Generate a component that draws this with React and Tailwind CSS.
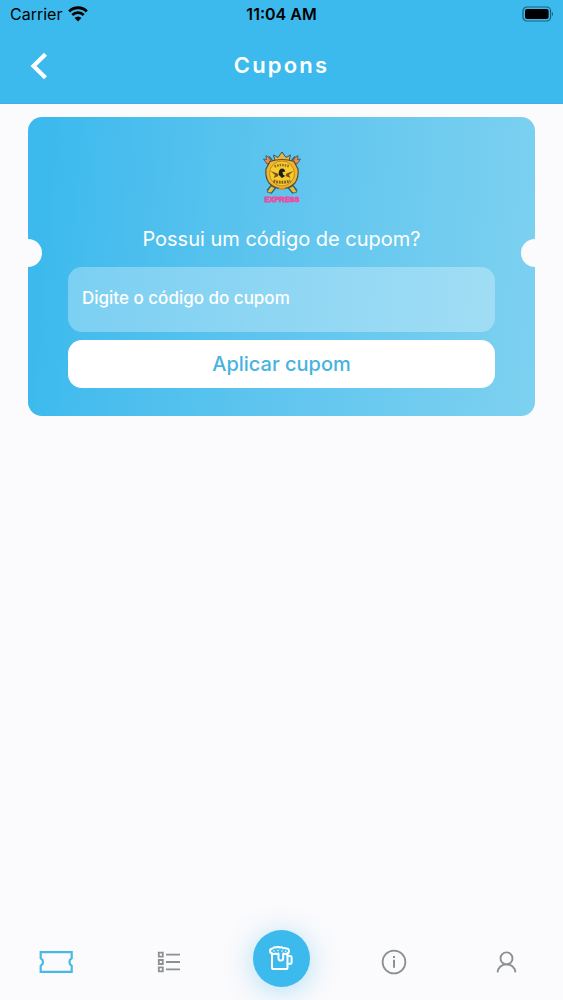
import { useState } from "react";

function StatusBar() {
  return (
    <div className="grid grid-cols-3 items-center h-7 px-2.5 text-black text-base leading-7">
      <div className="flex items-center gap-1.5">
        <span>Carrier</span>
        <svg className="w-5 h-4" viewBox="0 0 20 16" fill="none" stroke="currentColor" strokeWidth="2.8">
          <path d="M1.2 5.4a12.4 12.4 0 0 1 17.6 0" />
          <path d="M4.3 9a8 8 0 0 1 11.4 0" />
          <path d="M10 15.4l-3.4-3.4a4.600 4.600 0 0 1 6.800 0z" fill="currentColor" stroke="none" />
        </svg>
      </div>
      <div className="text-center font-semibold whitespace-nowrap">11:04 AM</div>
      <svg className="w-8 h-4 justify-self-end" viewBox="0 0 32 16" fill="none">
        <rect x="2" y="1" width="27.6" height="14" rx="4" stroke="#1c5f7d" strokeWidth="1.2" />
        <rect x="4" y="3" width="23.6" height="10" rx="2" fill="#000" />
        <path d="M31 6c1.3.7 1.3 3.3 0 4z" fill="#1c5f7d" />
      </svg>
    </div>
  );
}

function Header() {
  return (
    <header className="bg-[#3dbaed] border-b border-[#44afd9]">
      <StatusBar />
      <div className="grid grid-cols-3 items-center h-[75px] px-7 text-white">
        <button type="button" aria-label="Voltar" className="justify-self-start">
          <svg className="w-6 h-7" viewBox="0 0 24 28" fill="none" stroke="currentColor" strokeWidth="4.2">
            <path d="M17.5 2.2L5.5 14l12 11.8" />
          </svg>
        </button>
        <h1 className="text-center text-[22px] font-semibold tracking-widest">Cupons</h1>
      </div>
    </header>
  );
}

function Logo() {
  return (
    <svg className="w-10 h-14" viewBox="0 0 40 56" role="img" aria-label="Express">
      <g transform="translate(0 2)">
        {/* crossed sceptres */}
        <path d="M5 7L33 41M35 7L7 41" stroke="#27627c" strokeWidth="6.5" />
        <path d="M5 7L33 41M35 7L7 41" stroke="#ef9f38" strokeWidth="4" />
        <path d="M1.500 8l3 .5L4 4.500l3.500 2.500 2 4.500-4.500 1.500zM38.500 8l-3 .5.5-4-3.500 2.500-2 4.500 4.500 1.500z" fill="#ee8a4a" stroke="#3b5260" strokeWidth=".8" />
        <path d="M5 41l4-6 4 2-4 5zM35 41l-4-6-4 2 4 5z" fill="#e8c040" stroke="#2f5a60" strokeWidth=".8" />
        {/* crown */}
        <path d="M13 10l-1.500-6 4.500 2.500L20 1l4 5.500L28.500 4 27 10z" fill="#f0b23a" stroke="#3b5260" strokeWidth="1" />
        {/* medal */}
        <path d="M8 10.500q12-4 24 0l4 7.500q1 8-3 14-5 5-13 6-8-1-13-6-4-6-3-14z" fill="#f2b52c" stroke="#4b5340" strokeWidth="1.2" />
        <circle cx="20" cy="22.500" r="12.500" fill="#f8ca2c" stroke="#c08c22" strokeWidth="1" />
        <path d="M12.500 15.500q7.500-3 15 0" stroke="#94711f" strokeWidth="2.600" strokeDasharray="1.600 1" fill="none" />
        <path d="M8.500 20l7 2.500 1 2.500-5 2 1.500-3zM31.500 20l-7 2.500-1 2.500 5 2-1.500-3z" fill="#735420" />
        <path d="M17 20q1.500-3.500 5-2l1.500 2.500-3 .5.500 2.500 2 1.500-3 2-3.500-3.500z" fill="#17201d" />
        <path d="M11.500 30q8.500 2.500 17 0" stroke="#80601f" strokeWidth="3" strokeDasharray="1.800 .9" fill="none" />
        <path d="M14 36q6 2.500 12 0l-6 3.500z" fill="#dc962e" />
      </g>
      <text x="20" y="53" textAnchor="middle" fontSize="7.4" fontWeight="900" fill="#e650a5" stroke="#e650a5" strokeWidth="0.9" fontFamily="Liberation Sans, sans-serif">EXPRESS</text>
    </svg>
  );
}

function CouponCard() {
  const [code, setCode] = useState("");

  return (
    <form
      onSubmit={e => e.preventDefault()}
      className="relative overflow-hidden mx-7 mt-[13px] px-10 pt-8 pb-7 rounded-[14px] bg-linear-95 from-[#3dbaed] from-5% to-[#7dd1f0] flex flex-col"
    >
      <span className="absolute top-[122px] -left-3.5 size-7 rounded-full bg-[#fbfafc]" />
      <span className="absolute top-[122px] -right-3.5 size-7 rounded-full bg-[#fbfafc]" />
      <div className="flex justify-center">
        <Logo />
      </div>
      <label htmlFor="code" className="mt-5 mb-3.5 text-center text-xl leading-7 text-white">
        Possui um código de cupom?
      </label>
      <input
        id="code"
        type="text"
        value={code}
        onChange={e => setCode(e.target.value)}
        placeholder="Digite o código do cupom"
        className="w-full h-[65px] px-3.5 pb-1 rounded-[14px] bg-white/30 text-[17px] font-medium text-white placeholder:text-white outline-none"
      />
      <button type="submit" className="mt-2 h-12 rounded-[14px] bg-white text-xl font-medium text-[#48b3de]">
        Aplicar cupom
      </button>
    </form>
  );
}

function TicketIcon() {
  return (
    <svg className="w-[34px] h-6" viewBox="0 0 34 24" fill="none" stroke="#48b8e5" strokeWidth="2.2">
      <path d="M1.700 2.200h31v6a4.300 4.300 0 0 0 0 7.600v6h-31v-6a4.300 4.300 0 0 0 0-7.600z" />
    </svg>
  );
}

function ListIcon() {
  return (
    <svg className="w-6 h-6" viewBox="0 0 24 24" fill="none" stroke="#8b9093">
      <path d="M1.8 2.6h4v4h-4zM1.8 10h4v4h-4zM1.8 17.4h4v4h-4z" strokeWidth="1.8" />
      <path d="M9 4.6h14M9 12h14M9 19.4h14" strokeWidth="1.9" />
    </svg>
  );
}

function BeerIcon() {
  return (
    <svg className="w-6 h-6" viewBox="0 0 24 24" fill="none" stroke="#fff" strokeWidth="2" strokeLinejoin="round" strokeLinecap="round">
      <path d="M3 8v14q0 1 1 1h13.500q1 0 1-1V8" />
      <path d="M18.500 10H21q1.600 0 1.600 1.600v4.600q0 1.600-1.600 1.600h-2.500" />
      <path d="M9.500 7.500q-1.500.8-3 0-1.600.9-3 0Q1 7.400 1 5t2.700-2.500Q5 .8 7 1.600q1.800-1.500 3.800 0 2-.9 3.400.6 1.500-.6 2.800.3 3-.2 3 2.500t-2.700 2.700q-1.600.5-3.100-.2v4.700q0 2.300-2.400 2.300T9.500 12.200z" />
      <path d="M5 5h.1M9 4.500h.1M13 5.100h.1M16.500 5.200h.1" strokeWidth="1.500" />
    </svg>
  );
}

function InfoIcon() {
  return (
    <svg className="w-[26px] h-[26px]" viewBox="0 0 26 26" fill="none" stroke="#8b9093" strokeWidth="1.8">
      <circle cx="13" cy="13" r="11.4" />
      <path d="M13 10.800v8M13 7v2" strokeWidth="2" />
    </svg>
  );
}

function UserIcon() {
  return (
    <svg className="w-6 h-6" viewBox="0 0 24 24" fill="none" stroke="#8b9093" strokeWidth="1.9">
      <circle cx="11.500" cy="8.400" r="6" />
      <path d="M2.600 22.400c.3-5 4.200-8 8.900-8s8.600 3 8.900 8" />
    </svg>
  );
}

function BottomNav() {
  return (
    <nav className="grid grid-cols-5 h-[76px]">
      <a href="#cupons" aria-label="Cupons" className="flex items-center justify-center">
        <TicketIcon />
      </a>
      <a href="#pedidos" aria-label="Pedidos" className="flex items-center justify-center">
        <ListIcon />
      </a>
      <a href="#bebidas" aria-label="Bebidas" className="flex items-center justify-center pb-2">
        <span className="flex items-center justify-center size-[57px] rounded-full bg-[#3dbaed] shadow-[0_4px_28px_rgba(61,186,237,0.4)]">
          <BeerIcon />
        </span>
      </a>
      <a href="#info" aria-label="Informações" className="flex items-center justify-center">
        <InfoIcon />
      </a>
      <a href="#perfil" aria-label="Perfil" className="flex items-center justify-center">
        <UserIcon />
      </a>
    </nav>
  );
}

export default function App() {
  return (
    <div className="flex flex-col min-h-screen overflow-x-hidden bg-[#fbfafc] font-['Inter',sans-serif]">
      <Header />
      <main className="flex-1">
        <CouponCard />
      </main>
      <BottomNav />
    </div>
  );
}
